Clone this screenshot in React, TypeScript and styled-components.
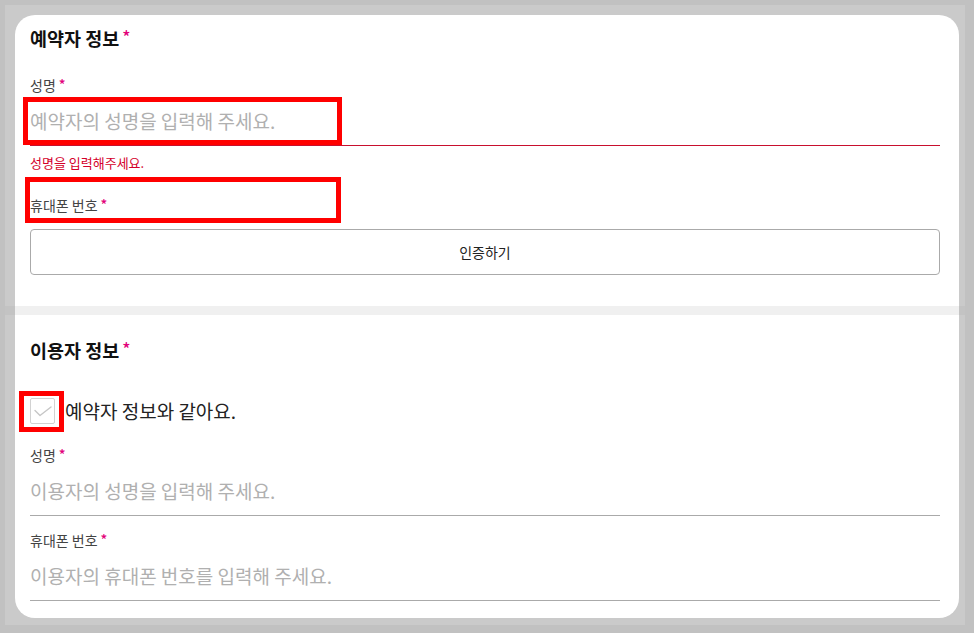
import React from 'react'
import styled, { createGlobalStyle } from 'styled-components'

const GlobalStyle = createGlobalStyle`
  html, body {
    margin: 0;
    padding: 0;
    height: 100%;
    overflow: hidden;
    background-color: #c1c1c1;
  }
  body {
    font-family: 'Noto Sans CJK KR', 'Noto Sans', sans-serif;
    color: #222222;
  }
  * {
    box-sizing: border-box;
  }
`

const Frame = styled.div`
  margin: 5px 9px 0 5px;
  padding: 10px 6px 7px 10px;
  background-color: #cacaca;
  display: flex;
  flex-direction: column;
`

const Section = styled.section<{ edge: 'top' | 'bottom' }>`
  background-color: #ffffff;
  display: flex;
  flex-direction: column;
  padding: ${props => props.edge === 'top' ? '10px 19px 31px 15px' : '22px 19px 17px 15px'};
  border-radius: ${props => props.edge === 'top' ? '20px 20px 0 0' : '0 0 20px 20px'};
`

const Divider = styled.div`
  height: 9px;
  margin: 0 -6px 0 -10px;
  background-color: #f0f0f0;
  border-left: 10px solid #c3c3c3;
  border-right: 6px solid #c3c3c3;
`

const Title = styled.h2`
  margin: 0;
  font-size: 18.5px;
  line-height: 26px;
  font-weight: 700;
  color: #111111;
  display: flex;
  align-items: center;
  gap: 3px;
`

const Star = styled.span<{ size?: number }>`
  color: #e2007a;
  font-size: ${props => props.size ?? 14}px;
  font-weight: 500;
  position: relative;
  top: -1px;
`

const Label = styled.div<{ gap: number }>`
  position: relative;
  margin-top: ${props => props.gap}px;
  font-size: 14px;
  line-height: 18px;
  color: #444444;
  display: flex;
  align-items: center;
  gap: 3px;
`

const InputWrap = styled.div`
  position: relative;
`

const TextInput = styled.input<{ invalid?: boolean }>`
  display: block;
  width: 100%;
  border: none;
  border-bottom: 1px solid ${props => props.invalid ? '#c8102e' : '#aaaaaa'};
  padding: 14px 0 13px 0;
  font-family: inherit;
  font-size: 19px;
  line-height: 24px;
  height: 52px;
  color: #222222;
  outline: none;
  background: transparent;

  &::placeholder {
    color: #b0b0b0;
  }
`

const ErrorText = styled.div`
  margin-top: 8px;
  font-size: 13px;
  line-height: 18px;
  color: #d4002a;
`

const VerifyButton = styled.button`
  margin-top: 15px;
  height: 46px;
  width: 100%;
  border: 1px solid #aaaaaa;
  border-radius: 4px;
  background-color: #ffffff;
  font-family: inherit;
  font-size: 14px;
  color: #222222;
  cursor: pointer;
`

const CheckRow = styled.label`
  margin-top: 35px;
  display: flex;
  align-items: center;
  gap: 10px;
  font-size: 19px;
  line-height: 26px;
  color: #222222;
  cursor: pointer;
`

const CheckBox = styled.span`
  position: relative;
  width: 25px;
  height: 26px;
  border: 1px solid #d2d2d2;
  border-radius: 2px;
  display: flex;
  align-items: center;
  justify-content: center;
  flex-shrink: 0;
`

const Highlight = styled.span<{ left: number; top: number; w: number; h: number }>`
  position: absolute;
  left: ${props => props.left}px;
  top: ${props => props.top}px;
  width: ${props => props.w}px;
  height: ${props => props.h}px;
  border: 5px solid #ff0000;
  pointer-events: none;
`

export default function App() {
  return (
    <>
      <GlobalStyle />
      <Frame>
        <Section edge="top">
          <Title>예약자 정보<Star size={17}>*</Star></Title>
          <Label gap={25}>성명<Star>*</Star></Label>
          <InputWrap>
            <TextInput invalid placeholder="예약자의 성명을 입력해 주세요." />
            <Highlight left={-7} top={3} w={319} h={48} />
          </InputWrap>
          <ErrorText>성명을 입력해주세요.</ErrorText>
          <Label gap={24}>
            휴대폰 번호<Star>*</Star>
            <Highlight left={-5} top={-19} w={316} h={46} />
          </Label>
          <VerifyButton>인증하기</VerifyButton>
        </Section>
        <Divider />
        <Section edge="bottom">
          <Title>이용자 정보<Star size={17}>*</Star></Title>
          <CheckRow>
            <CheckBox>
              <svg width="18" height="11" viewBox="0 0 18 11" fill="none">
                <path d="M1 4.5 L6 9.5 L17 1" stroke="#c6c6c6" strokeWidth="1.4" strokeLinecap="round" strokeLinejoin="round" />
              </svg>
              <Highlight left={-12} top={-8} w={45} h={41} />
            </CheckBox>
            예약자 정보와 같아요.
          </CheckRow>
          <Label gap={22}>성명<Star>*</Star></Label>
          <TextInput placeholder="이용자의 성명을 입력해 주세요." />
          <Label gap={15}>휴대폰 번호<Star>*</Star></Label>
          <TextInput placeholder="이용자의 휴대폰 번호를 입력해 주세요." />
        </Section>
      </Frame>
    </>
  )
}
